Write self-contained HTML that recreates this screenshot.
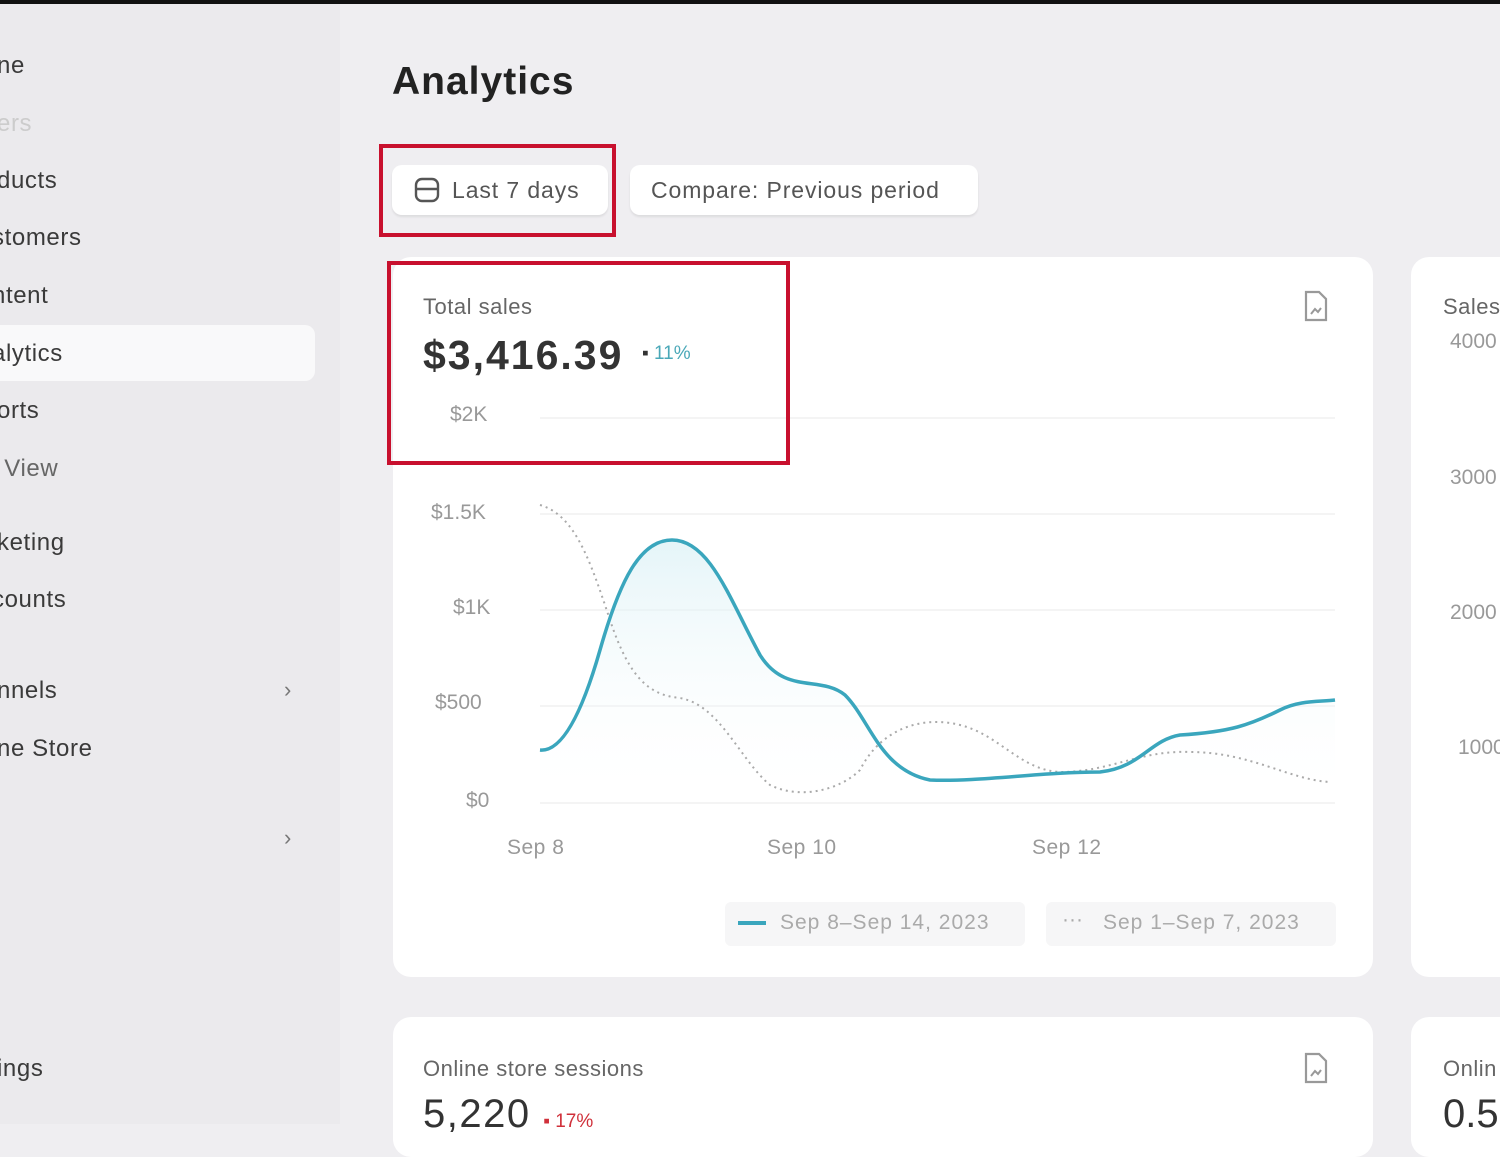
<!DOCTYPE html>
<html><head><meta charset="utf-8"><style>
*{margin:0;padding:0;box-sizing:border-box}
body{width:1500px;height:1124px;overflow:hidden;background:#efeef1;font-family:"Liberation Sans",sans-serif;position:relative;color:#303030}
.top{position:absolute;left:0;top:0;width:1500px;height:4px;background:#111}
.side{position:absolute;left:0;top:4px;width:340px;height:1120px;background:#ebeaed}
.nav{position:absolute;left:-3px;font-size:24px;color:#3a3a3a;letter-spacing:.6px}
.sel{position:absolute;left:0;top:325px;width:315px;height:56px;background:#f9f9fa;border-radius:0 10px 10px 0}
.chev{position:absolute;left:284px;font-size:22px;color:#777}
h1{position:absolute;left:392px;top:60px;font-size:39px;font-weight:bold;color:#222;letter-spacing:1px}
.btn{position:absolute;top:165px;height:50px;background:#fff;border-radius:10px;box-shadow:0 2px 2px rgba(0,0,0,.08);font-size:23px;color:#555;display:flex;align-items:center;letter-spacing:.9px}
.red{position:absolute;border:4px solid #c8102e}
.card{position:absolute;background:#fff;border-radius:18px}
.t{position:absolute;font-size:22px;color:#666;letter-spacing:.5px}
.ax{position:absolute;font-size:21px;color:#999}
</style></head><body>
<div class="top"></div>
<div class="side"></div>
<div class="sel"></div>
<div class="nav" style="top:52px">ne</div>
<div class="nav" style="top:110px;color:#ccc">ers</div>
<div class="nav" style="top:167px">ducts</div>
<div class="nav" style="top:224px;left:-8px">stomers</div>
<div class="nav" style="top:282px;left:-8px">ntent</div>
<div class="nav" style="top:340px;left:-8px">alytics</div>
<div class="nav" style="top:397px">orts</div>
<div class="nav" style="top:455px;color:#666">&nbsp;View</div>
<div class="nav" style="top:529px">keting</div>
<div class="nav" style="top:586px;left:-8px">counts</div>
<div class="nav" style="top:677px">nnels</div>
<div class="chev" style="top:677px">›</div>
<div class="nav" style="top:735px">ne Store</div>
<div class="chev" style="top:825px">›</div>
<div class="nav" style="top:1055px">ings</div>

<h1>Analytics</h1>
<div class="btn" style="left:392px;width:216px;padding-left:22px">
<svg width="26" height="26" viewBox="0 0 26 26" style="margin-right:12px"><rect x="2" y="2" width="22" height="22" rx="6" fill="none" stroke="#555" stroke-width="2.4"/><line x1="2" y1="12" x2="24" y2="12" stroke="#555" stroke-width="2.4"/></svg>Last 7 days</div>
<div class="btn" style="left:630px;width:348px;padding-left:21px">Compare: Previous period</div>
<div class="red" style="left:379px;top:144px;width:237px;height:93px"></div>

<div class="card" style="left:393px;top:257px;width:980px;height:720px"></div>
<div class="card" style="left:1411px;top:257px;width:120px;height:720px"></div>
<div class="card" style="left:393px;top:1017px;width:980px;height:140px"></div>
<div class="card" style="left:1411px;top:1017px;width:120px;height:140px"></div>

<div class="t" style="left:423px;top:294px">Total sales</div>
<div style="position:absolute;left:423px;top:332px;font-size:41px;font-weight:bold;color:#333;letter-spacing:2px">$3,416.39</div>
<div style="position:absolute;left:642px;top:343px;font-size:19px;color:#4aa8b8"><span style="color:#333">▪</span> 11%</div>
<svg style="position:absolute;left:1302px;top:290px" width="28" height="32" viewBox="0 0 28 32"><path d="M4 2h13l7 7v21H4z" fill="none" stroke="#999" stroke-width="2.2"/><path d="M9 24l4-5 3 3 3-4" fill="none" stroke="#999" stroke-width="2"/></svg>
<svg style="position:absolute;left:1302px;top:1052px" width="28" height="32" viewBox="0 0 28 32"><path d="M4 2h13l7 7v21H4z" fill="none" stroke="#999" stroke-width="2.2"/><path d="M9 24l4-5 3 3 3-4" fill="none" stroke="#999" stroke-width="2"/></svg>

<div class="ax" style="left:450px;top:403px">$2K</div>
<div class="ax" style="left:431px;top:501px">$1.5K</div>
<div class="ax" style="left:453px;top:596px">$1K</div>
<div class="ax" style="left:435px;top:691px">$500</div>
<div class="ax" style="left:466px;top:789px">$0</div>
<div class="ax" style="left:507px;top:836px;letter-spacing:.5px">Sep 8</div>
<div class="ax" style="left:767px;top:836px;letter-spacing:.5px">Sep 10</div>
<div class="ax" style="left:1032px;top:836px;letter-spacing:.5px">Sep 12</div>

<svg style="position:absolute;left:0;top:0" width="1500" height="1124">
<defs><linearGradient id="g" x1="0" y1="0" x2="0" y2="1"><stop offset="0" stop-color="#d9f0f5"/><stop offset="1" stop-color="#fff" stop-opacity="0"/></linearGradient></defs>
<g stroke="#f0f0f0" stroke-width="1.5"><line x1="540" y1="418" x2="1335" y2="418"/><line x1="540" y1="514" x2="1335" y2="514"/><line x1="540" y1="610" x2="1335" y2="610"/><line x1="540" y1="706" x2="1335" y2="706"/><line x1="540" y1="803" x2="1335" y2="803"/></g>
<path d="M540 750 C560 752 580 720 600 650 C620 580 640 540 672 540 C710 540 730 600 760 655 C785 695 820 675 845 695 C870 720 880 770 930 780 C980 782 1040 772 1100 772 C1140 768 1150 740 1180 735 C1230 732 1250 725 1280 710 C1300 700 1320 702 1335 700 L1335 803 L540 803Z" fill="url(#g)" opacity=".7"/>
<path d="M540 505 C575 515 590 560 610 620 C630 680 650 695 680 698 C720 705 740 760 770 785 C800 800 840 790 860 770 C880 730 920 715 960 725 C1000 735 1020 770 1060 772 C1110 772 1140 750 1190 752 C1250 752 1290 780 1330 782" fill="none" stroke="#aaa" stroke-width="2" stroke-dasharray="2 4"/>
<path d="M540 750 C560 752 580 720 600 650 C620 580 640 540 672 540 C710 540 730 600 760 655 C785 695 820 675 845 695 C870 720 880 770 930 780 C980 782 1040 772 1100 772 C1140 768 1150 740 1180 735 C1230 732 1250 725 1280 710 C1300 700 1320 702 1335 700" fill="none" stroke="#3aa6bd" stroke-width="3.5"/>
</svg>

<div style="position:absolute;left:725px;top:902px;width:300px;height:44px;background:#f6f6f7;border-radius:6px"></div>
<div style="position:absolute;left:738px;top:921px;width:28px;height:4px;background:#3aa6bd"></div>
<div class="ax" style="left:780px;top:911px;color:#aaa;letter-spacing:1px">Sep 8–Sep 14, 2023</div>
<div style="position:absolute;left:1046px;top:902px;width:290px;height:44px;background:#f6f6f7;border-radius:6px"></div>
<div class="ax" style="left:1062px;top:908px;color:#aaa">···</div>
<div class="ax" style="left:1103px;top:911px;color:#aaa;letter-spacing:1px">Sep 1–Sep 7, 2023</div>

<div class="t" style="left:1443px;top:294px">Sales</div>
<div class="ax" style="left:1450px;top:330px">4000</div>
<div class="ax" style="left:1450px;top:466px">3000</div>
<div class="ax" style="left:1450px;top:601px">2000</div>
<div class="ax" style="left:1458px;top:736px">1000</div>

<div class="red" style="left:387px;top:261px;width:403px;height:204px"></div>

<div class="t" style="left:423px;top:1056px">Online store sessions</div>
<div style="position:absolute;left:423px;top:1092px;font-size:40px;color:#333;letter-spacing:1.5px">5,220 <span style="font-size:19px;color:#d0303a;letter-spacing:0">▪ 17%</span></div>
<div class="t" style="left:1443px;top:1056px">Onlin</div>
<div style="position:absolute;left:1443px;top:1092px;font-size:40px;color:#333">0.5</div>
</body></html>
